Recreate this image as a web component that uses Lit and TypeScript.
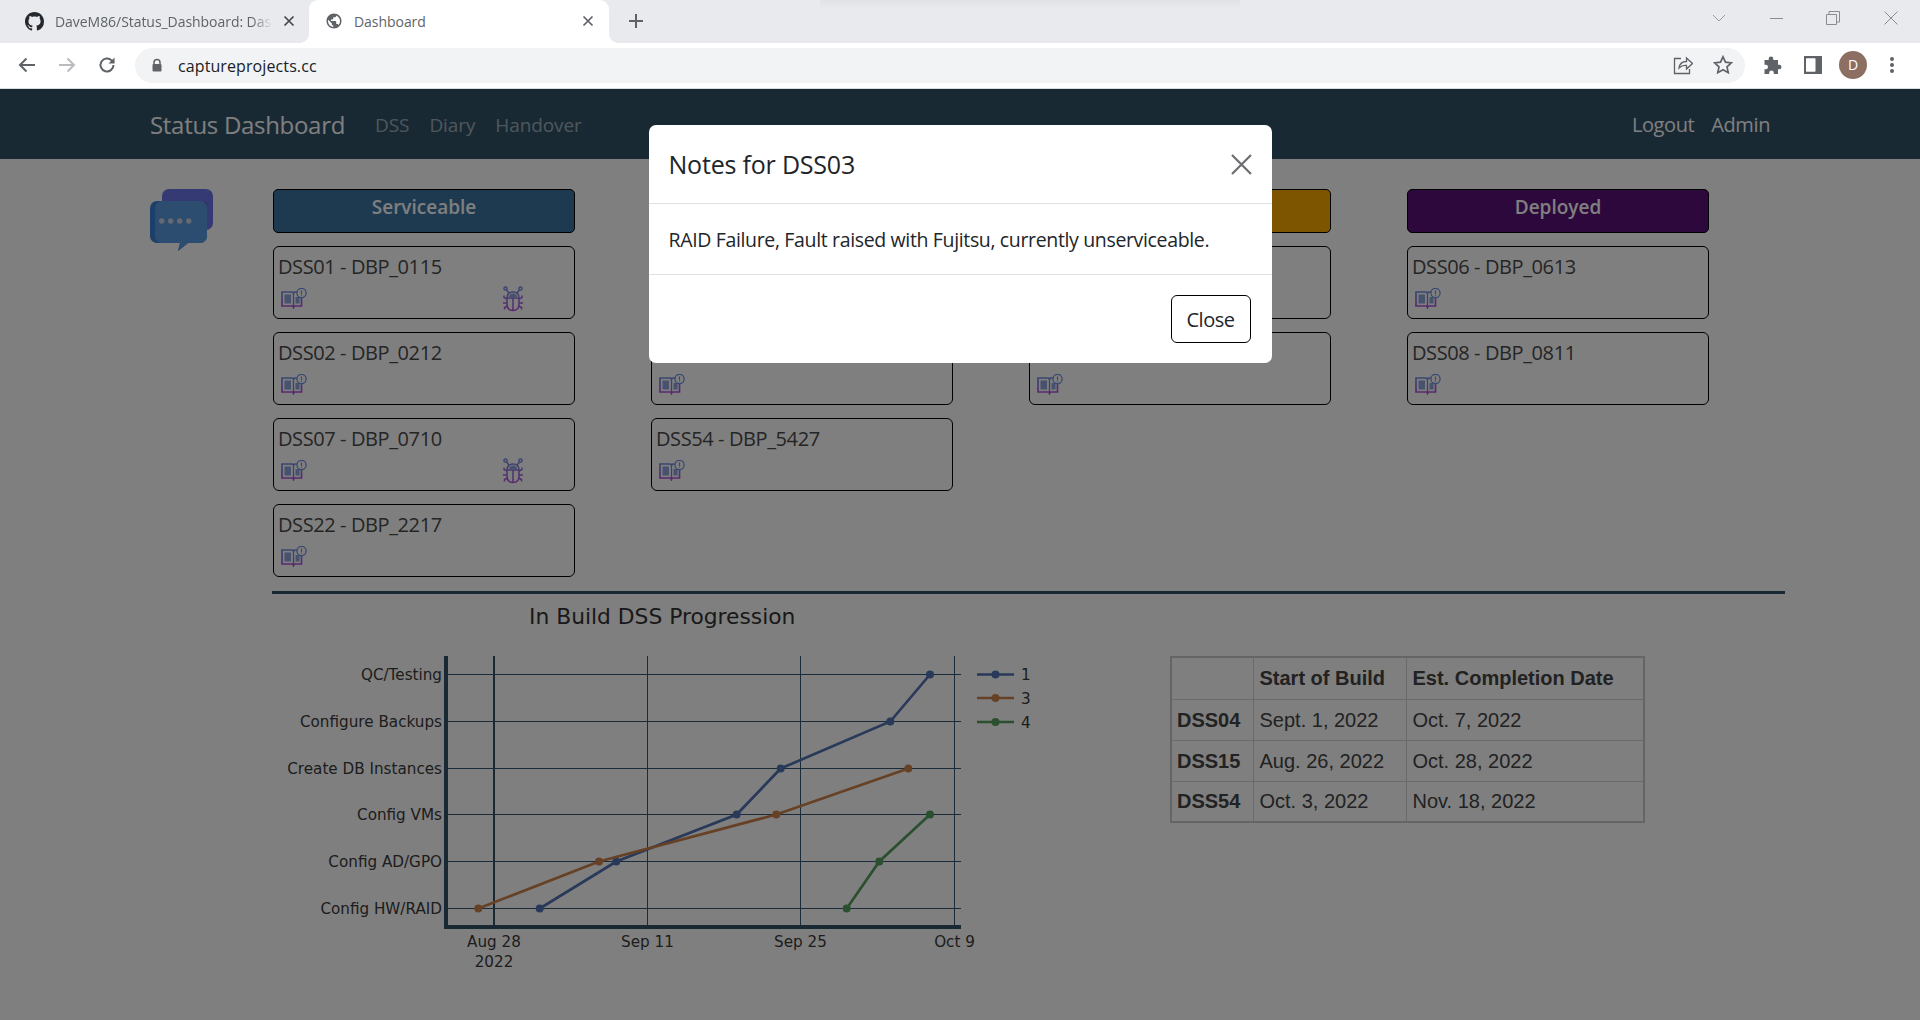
import { LitElement, html, css, svg } from "lit";
import { customElement } from "lit/decorators.js";

const bookIcon = html`<svg class="book" viewBox="0 0 26 21" aria-hidden="true">
  <defs><linearGradient id="g1" gradientUnits="userSpaceOnUse" x1="0" y1="3" x2="0" y2="20"><stop offset="0" stop-color="#6f92e0"/><stop offset="1" stop-color="#b84cdc"/></linearGradient></defs>
  <path d="M1 4h9.500q1.500 0 2 1q.5-1 2-1h6v14h-7.500l-.5 1.500l-.5-1.500h-11z" fill="none" stroke="url(#g1)" stroke-width="1.700"/>
  <path d="M12.500 5v13" stroke="url(#g1)" stroke-width="1.300"/>
  <rect x="3.500" y="6.500" width="6.500" height="9" fill="#8fa4dc"/>
  <rect x="14.500" y="9" width="4" height="6.500" fill="#8fa4dc"/>
  <circle cx="20.500" cy="5" r="4.600" fill="#fff" stroke="#6f92e0" stroke-width="1.300"/>
  <path d="M20.500 2.500v3.400M20.500 6.800v1" stroke="#6f92e0" stroke-width="1.200"/>
</svg>`;

const bugIcon = html`<svg class="bug" viewBox="0 0 22 26" aria-hidden="true">
  <defs><linearGradient id="g2" gradientUnits="userSpaceOnUse" x1="0" y1="0" x2="0" y2="26"><stop offset="0" stop-color="#6f92e0"/><stop offset="1" stop-color="#b84cdc"/></linearGradient></defs>
  <g fill="none" stroke="url(#g2)" stroke-width="1.500">
    <circle cx="3.500" cy="2.500" r="1.600"/><circle cx="18.500" cy="2.500" r="1.600"/>
    <path d="M4.500 4l3 3.500M17.500 4l-3 3.500"/>
    <path d="M5 12q0-6 6-6t6 6v6q0 6.500-6 6.500t-6-6.500z"/>
    <path d="M5 12h12M11 12v12.500"/>
    <path d="M5 13l-3-1.500v-2M17 13l3-1.500v-2M5 17h-4M17 17h4M5.500 20l-3 1.500v2M16.500 20l3 1.500v2"/>
  </g>
  <path d="M7 11q0-3.500 4-3.500t4 3.500z" fill="#8fa4dc"/>
</svg>`;

interface Card { name: string; bug?: boolean }
const columns: { title: string; cls: string; cards: Card[] }[] = [
  { title: "Serviceable", cls: "c-blue", cards: [
    { name: "DSS01 - DBP_0115", bug: true },
    { name: "DSS02 - DBP_0212" },
    { name: "DSS07 - DBP_0710", bug: true },
    { name: "DSS22 - DBP_2217" },
  ] },
  { title: "In Build", cls: "c-green", cards: [
    { name: "DSS04" },
    { name: "DSS15" },
    { name: "DSS54 - DBP_5427" },
  ] },
  { title: "Unserviceable", cls: "c-orange", cards: [
    { name: "DSS03" },
    { name: "DSS05" },
  ] },
  { title: "Deployed", cls: "c-purple", cards: [
    { name: "DSS06 - DBP_0613" },
    { name: "DSS08 - DBP_0811" },
  ] },
];

const yRows = [
  { label: "QC/Testing", y: 18.5 },
  { label: "Configure Backups", y: 65.5 },
  { label: "Create DB Instances", y: 112.5 },
  { label: "Config VMs", y: 158.5 },
  { label: "Config AD/GPO", y: 205.5 },
  { label: "Config HW/RAID", y: 252.5 },
];
// x positions below are relative to the chart's left edge at page x = 270; y to page y = 656.
const xTicks = [
  { x: 224, label: "Aug 28", sub: "2022" },
  { x: 377.5, label: "Sep 11" },
  { x: 530.5, label: "Sep 25" },
  { x: 684.5, label: "Oct 9" },
];
const series = [
  { color: "#5072b4", pts: [[269.7, 252.5], [346.3, 205.5], [466.7, 158.5], [510.7, 112.5], [620.3, 65.5], [660, 18.5]] },
  { color: "#cc834b", pts: [[208.3, 252.5], [329, 205.5], [506.3, 158.5], [638.3, 112.5]] },
  { color: "#55a05f", pts: [[576.7, 252.5], [609.3, 205.5], [660, 158.5]] },
];
const legend = [
  { label: "1", color: "#5072b4", y: 18.5 },
  { label: "3", color: "#cc834b", y: 42 },
  { label: "4", color: "#55a05f", y: 66 },
];

const rows = [
  ["DSS04", "Sept. 1, 2022", "Oct. 7, 2022"],
  ["DSS15", "Aug. 26, 2022", "Oct. 28, 2022"],
  ["DSS54", "Oct. 3, 2022", "Nov. 18, 2022"],
];

@customElement("app-root")
export class AppRoot extends LitElement {
  static styles = css`
    :host { display: block; width: 1920px; height: 1020px; overflow: hidden; background: #fff; font-family: "Open Sans", "Noto Sans", sans-serif; color: #4a4a4a; }
    * { box-sizing: border-box; }

    .tabstrip { height: 43px; background: #e8eaed; display: flex; align-items: flex-start; position: relative; }
    .tabstrip::before { content: ""; position: absolute; left: 820px; top: 0; width: 420px; height: 9px; background: linear-gradient(180deg, rgba(0,0,0,.035), transparent); }
    .tab { height: 43px; width: 300px; display: flex; align-items: center; font-size: 14px; color: #5f6368; position: relative; letter-spacing: -.05px; padding-bottom: 1px; }
    .tab.inactive { width: 309px; padding-left: 25px; }
    .tab.active { background: #fff; border-radius: 9px 9px 0 0; padding-left: 16px; }
    .tab.active::before, .tab.active::after { content: ""; position: absolute; bottom: 0; width: 9px; height: 9px; }
    .tab.active::before { left: -9px; background: radial-gradient(circle at 0 0, transparent 8.500px, #fff 9px); }
    .tab.active::after { right: -9px; background: radial-gradient(circle at 100% 0, transparent 8.500px, #fff 9px); }
    .tab .title { flex: 1; overflow: hidden; white-space: nowrap; margin-left: 11px; }
    .tab.inactive .title { -webkit-mask-image: linear-gradient(90deg, #000 90%, transparent); mask-image: linear-gradient(90deg, #000 90%, transparent); max-width: 218px; }
    .tab-x { width: 12px; height: 12px; flex: none; }
    .tab.inactive .tab-x { margin: 0 14px 0 10px; }
    .tab.active .tab-x { margin-right: 15px; }
    .newtab { width: 16px; height: 16px; margin: 13px 0 0 19px; }
    .winctl { margin-left: auto; display: flex; align-items: center; height: 36px; }
    .winctl svg { display: block; }

    .toolbar { height: 46px; background: #fff; border-bottom: 1px solid #dadce0; display: flex; align-items: center; padding: 0 0 1px 0; }
    .navbtn { width: 20px; height: 20px; flex: none; }
    .omni { height: 35px; background: #f1f3f4; border-radius: 18px; width: 1610px; margin-left: 18px; display: flex; align-items: center; padding-left: 15px; font-size: 16px; color: #202124; letter-spacing: .1px; }
    .omni .url { margin-left: 14px; flex: 1; padding-top: 1px; }

    .page { position: relative; height: 931px; overflow: hidden; }
    .navbar { height: 70px; background: #305268; display: flex; align-items: center; padding: 0 150px; color: #fff; }
    .brand { font-size: 24px; letter-spacing: -.3px; margin-right: 30px; }
    .nav-link { font-size: 19px; letter-spacing: -.1px; color: rgba(255,255,255,.55); margin-right: 20px; padding-top: 1px; }
    .nav-right { margin-left: auto; display: flex; gap: 17px; }
    .nav-right span { font-size: 20px; letter-spacing: -.4px; color: #fff; }

    .board { display: flex; padding: 30px 0 0 150px; }
    .chat { width: 123px; flex: none; }
    .chat svg { display: block; width: 64px; height: 64px; }
    .cols { display: grid; grid-template-columns: repeat(4, 302px); column-gap: 76px; align-items: start; }
    .col { display: flex; flex-direction: column; gap: 13px; }
    .col-head { height: 44px; border: 1px solid #000; border-radius: 5px; text-align: center; font-weight: 600; font-size: 19px; color: #fff; padding-top: 4px; }
    .c-blue { background: #3c74a0; }
    .c-green { background: #3c8c4a; }
    .c-orange { background: #fbaa00; }
    .c-purple { background: #5a1078; }
    .card { height: 73px; border: 1px solid #000; border-radius: 6px; padding: 5px 4px; font-size: 20px; letter-spacing: -.4px; background: #fff; }
    .card .nm { line-height: 29px; }
    .card .icons { display: flex; align-items: flex-start; height: 26px; padding-left: 3px; margin-top: 5px; }
    .book { width: 26px; height: 21px; margin-top: 2px; flex: none; }
    .bug { width: 22px; height: 26px; margin-left: 195px; flex: none; }

    .rule { height: 3px; width: 1513px; margin: 14px 0 0 272px; background: #305268; }

    .lower { display: flex; align-items: flex-start; padding: 0 0 0 270px; }
    .chartwrap { width: 900px; flex: none; }
    .charttitle { font-family: "DejaVu Sans", Verdana, sans-serif; font-size: 21.800px; padding: 9px 0 0 259px; line-height: 28px; white-space: nowrap; color: #333; }
    .chart { display: block; width: 900px; height: 340px; margin-top: 25px; }
    .chart text { font-family: "DejaVu Sans", Verdana, sans-serif; font-size: 15.200px; fill: #3a3a3a; }
    .chart .ty { text-anchor: end; }
    .chart .tx { text-anchor: middle; }

    table { border-collapse: collapse; table-layout: fixed; width: 473px; font-family: "Liberation Sans", Arial, sans-serif; font-size: 20px; color: #444; margin-top: 62px; border: 2px solid #cacaca; }
    .w1 { width: 82px; } .w2 { width: 153px; } .w3 { width: 238px; }
    th, td { border: 1px solid #d4d4d4; padding: 1px 6px 0; height: 41px; text-align: left; white-space: nowrap; font-weight: 400; }
    tr:first-child th { height: 42px; }
    tr > th:first-child { padding-left: 5px; }
    th { font-weight: 700; }

    .backdrop { position: absolute; inset: 0; background: rgba(0,0,0,.5); display: flex; justify-content: center; align-items: flex-start; padding-top: 36px; }
    .modal { width: 623px; height: 238px; background: #fff; border-radius: 7px; display: flex; flex-direction: column; }
    .m-head { height: 79px; border-bottom: 1px solid #dee2e6; display: flex; align-items: center; padding: 0 20px; justify-content: space-between; }
    .m-title { font-size: 25px; letter-spacing: -.2px; color: #212529; }
    .m-x { width: 21px; height: 21px; display: block; }
    .m-body { height: 71px; border-bottom: 1px solid #dee2e6; padding: 0 20px; display: flex; align-items: center; font-size: 19.500px; letter-spacing: -.35px; color: #212529; }
    .m-foot { flex: 1; display: flex; justify-content: flex-end; align-items: center; padding: 0 21px 0 0; }
    .close-btn { width: 80px; height: 48px; border: 1px solid #000; border-radius: 6px; background: #fff; font: inherit; font-size: 20px; letter-spacing: -.5px; color: #212529; padding: 0; }
  `;

  private chart() {
    return html`<svg class="chart" viewBox="0 0 900 340" aria-label="In Build DSS Progression chart">
      ${xTicks.map((t, i) => svg`<line x1=${t.x} x2=${t.x} y1="0" y2="271" stroke=${i === 0 ? "#305268" : "#345674"} stroke-width=${i === 0 ? 2 : 1}/>`)}
      ${yRows.map(r => svg`<line x1="176" x2="691" y1=${r.y} y2=${r.y} stroke="#345674" stroke-width="1"/>`)}
      <path d="M176 0V271H691" fill="none" stroke="#305268" stroke-width="4"/>
      ${yRows.map(r => svg`<text class="ty" x="172" y=${r.y + 5.5}>${r.label}</text>`)}
      ${xTicks.map(t => svg`<text class="tx" x=${t.x} y="291">${t.label}</text>`)}
      <text class="tx" x="224" y="311">2022</text>
      ${series.map(s => svg`<polyline points=${s.pts.map(p => p.join(",")).join(" ")} fill="none" stroke=${s.color} stroke-width="2.700"/>
        ${s.pts.map(p => svg`<circle cx=${p[0]} cy=${p[1]} r="4" fill=${s.color}/>`)}`)}
      ${legend.map(l => svg`<line x1="707" x2="744" y1=${l.y} y2=${l.y} stroke=${l.color} stroke-width="2.700"/>
        <circle cx="725.500" cy=${l.y} r="4" fill=${l.color}/>
        <text x="751" y=${l.y + 5.5}>${l.label}</text>`)}
    </svg>`;
  }

  render() {
    return html`
      <div class="tabstrip">
        <div class="tab inactive">
          <svg width="19" height="19" viewBox="0 0 16 16" style="flex:none"><path fill="#24292f" d="M8 0C3.580 0 0 3.580 0 8c0 3.540 2.290 6.530 5.470 7.590.4.070.55-.17.55-.38 0-.19-.01-.82-.01-1.490-2.010.37-2.530-.49-2.690-.94-.09-.23-.48-.94-.82-1.130-.28-.15-.68-.52-.01-.53.63-.01 1.080.58 1.230.82.720 1.210 1.870.87 2.330.66.070-.52.280-.87.510-1.070-1.780-.2-3.640-.89-3.640-3.950 0-.87.310-1.590.82-2.150-.08-.2-.36-1.020.08-2.120 0 0 .67-.21 2.200.82.640-.18 1.320-.27 2-.27s1.360.09 2 .27c1.530-1.040 2.200-.82 2.200-.82.440 1.100.16 1.920.08 2.120.51.560.82 1.270.82 2.150 0 3.070-1.870 3.750-3.650 3.950.29.250.54.730.54 1.480 0 1.070-.01 1.930-.01 2.200 0 .21.150.46.550.38A8.010 8.010 0 0 0 16 8c0-4.420-3.580-8-8-8z"/></svg>
          <span class="title">DaveM86/Status_Dashboard: Das</span>
          <svg class="tab-x" viewBox="0 0 12 12"><path d="M1.500 1.500l9 9M10.500 1.500l-9 9" stroke="#45484d" stroke-width="1.700"/></svg>
        </div>
        <div class="tab active">
          <svg width="18" height="18" viewBox="0 0 24 24" style="flex:none"><path fill="#5f6368" d="M12 2C6.480 2 2 6.480 2 12s4.480 10 10 10 10-4.480 10-10S17.520 2 12 2zm-1 17.930c-3.950-.49-7-3.850-7-7.930 0-.62.080-1.210.21-1.790L9 15v1c0 1.100.9 2 2 2v1.930zm6.900-2.540c-.26-.81-1-1.390-1.900-1.390h-1v-3c0-.55-.45-1-1-1H8v-2h2c.55 0 1-.45 1-1V7h2c1.100 0 2-.9 2-2v-.41c2.930 1.190 5 4.060 5 7.410 0 2.080-.8 3.970-2.100 5.390z"/></svg>
          <span class="title">Dashboard</span>
          <svg class="tab-x" viewBox="0 0 12 12"><path d="M1.500 1.500l9 9M10.500 1.500l-9 9" stroke="#5f6368" stroke-width="1.700"/></svg>
        </div>
        <svg class="newtab" viewBox="0 0 16 16"><path d="M8 1v14M1 8h14" stroke="#5f6368" stroke-width="2"/></svg>
        <div class="winctl">
          <svg width="14" height="10" viewBox="0 0 14 10" style="margin-right:44px"><path d="M1 2l6 6 6-6" fill="none" stroke="#9a9c9f" stroke-width="1"/></svg>
          <svg width="14" height="14" viewBox="0 0 14 14" style="margin-right:42px"><path d="M0 7.500h13" stroke="#8a8c8f" stroke-width="1"/></svg>
          <svg width="14" height="14" viewBox="0 0 14 14" style="margin-right:44px"><path d="M.5 3.500h10v10h-10zM3 3.500V.5h10.500v10.500h-3" fill="none" stroke="#8a8c8f" stroke-width="1"/></svg>
          <svg width="14" height="14" viewBox="0 0 14 14" style="margin-right:22px"><path d="M.5.500l13 13M13.500.500l-13 13" stroke="#8a8c8f" stroke-width="1"/></svg>
        </div>
      </div>
      <div class="toolbar">
        <svg class="navbtn" style="margin-left:17px" viewBox="0 0 20 20"><path d="M18 10H3M9.500 3.500L3 10l6.500 6.500" fill="none" stroke="#5f6368" stroke-width="2"/></svg>
        <svg class="navbtn" style="margin-left:20px" viewBox="0 0 20 20"><path d="M2 10h15M10.500 3.500L17 10l-6.500 6.500" fill="none" stroke="#b9bbbe" stroke-width="2"/></svg>
        <svg class="navbtn" style="margin-left:20px" viewBox="0 0 20 20"><path d="M16.500 10a6.500 6.500 0 1 1-1.900-4.600L17 7.500" fill="none" stroke="#5f6368" stroke-width="2"/><path d="M17.500 2.500v6h-6z" fill="#5f6368"/></svg>
        <div class="omni">
          <svg width="14" height="14" viewBox="0 0 14 14" style="flex:none"><path d="M4 6.500V4.500a3 3 0 0 1 6 0v2" fill="none" stroke="#5f6368" stroke-width="1.500"/><rect x="2.500" y="6" width="9" height="7.500" rx="1" fill="#5f6368"/></svg>
          <span class="url">captureprojects.cc</span>
          <svg width="20" height="20" viewBox="0 0 20 20" style="margin-right:20px;flex:none"><path d="M8 3.500H1.500v15h15V14M6 13q1-6.500 7.500-6.500V3l6 5.500-6 5.500V10.500Q9 10 6 13z" fill="none" stroke="#5f6368" stroke-width="1.300"/></svg>
          <svg width="20" height="20" viewBox="0 0 20 20" style="margin-right:12px;flex:none"><path d="M10 1.800l2.500 5.400 5.900.7-4.400 4 1.200 5.800L10 14.800l-5.200 2.900L6 11.900l-4.400-4 5.900-.7z" fill="none" stroke="#5f6368" stroke-width="1.700"/></svg>
        </div>
        <svg width="20" height="20" viewBox="0 0 20 20" style="margin-left:18px;flex:none"><path fill="#5f6368" d="M8 1.500a2.300 2.300 0 0 1 2.300 2.300V5H15v4.700h1.200a2.300 2.300 0 0 1 0 4.600H15V19H10.800v-1.200a2.300 2.300 0 0 0-4.600 0V19H1.500v-4.700h1.200a2.300 2.300 0 0 0 0-4.600H1.500V5h4.200V3.800A2.300 2.300 0 0 1 8 1.500z"/></svg>
        <svg width="18" height="18" viewBox="0 0 18 18" style="margin-left:21px;flex:none"><path fill="#5f6368" d="M0 0h18v18H0zM2 2.500v13h9v-13z"/><rect x="2.500" y="2.500" width="9" height="13" fill="#fff"/></svg>
        <svg width="28" height="28" viewBox="0 0 28 28" style="margin-left:17px;flex:none"><circle cx="14" cy="14" r="14" fill="#8d6e63"/><text x="14" y="19" text-anchor="middle" font-size="14" fill="#fff" font-family="Open Sans, sans-serif">D</text></svg>
        <svg width="6" height="18" viewBox="0 0 6 18" style="margin-left:22px;flex:none"><circle cx="3" cy="3" r="2" fill="#5f6368"/><circle cx="3" cy="9" r="2" fill="#5f6368"/><circle cx="3" cy="15" r="2" fill="#5f6368"/></svg>
      </div>
      <div class="page">
        <div class="navbar">
          <span class="brand">Status Dashboard</span>
          <span class="nav-link">DSS</span>
          <span class="nav-link">Diary</span>
          <span class="nav-link">Handover</span>
          <div class="nav-right"><span>Logout</span><span>Admin</span></div>
        </div>
        <div class="board">
          <div class="chat">
            <svg viewBox="0 0 64 64" aria-hidden="true">
              <path d="M12 12V7a7 7 0 0 1 7-7h37a7 7 0 0 1 7 7v27a7 7 0 0 1-7 7h-4V12z" fill="#6a74e8"/>
              <path d="M52 13h5v28h-5z" fill="#5a60cc"/>
              <path d="M7 12H50a7 7 0 0 1 7 7V47a7 7 0 0 1-7 7H38L28 62 30 54H7a7 7 0 0 1-7-7V19a7 7 0 0 1 7-7z" fill="#3a80d0"/>
              <path d="M12 12H50a7 7 0 0 1 7 7V47a7 7 0 0 1-7 7H38L28 62 30 54H12a7 7 0 0 1-7-7V19a7 7 0 0 1 7-7z" fill="#5a9ae0"/>
              <circle cx="11.700" cy="32" r="2.700" fill="#c8d4e4"/><circle cx="20.700" cy="32" r="2.700" fill="#c8d4e4"/><circle cx="29.700" cy="32" r="2.700" fill="#c8d4e4"/><circle cx="38.700" cy="32" r="2.700" fill="#c8d4e4"/>
            </svg>
          </div>
          <div class="cols">
            ${columns.map(c => html`<div class="col">
              <div class="col-head ${c.cls}">${c.title}</div>
              ${c.cards.map(k => html`<div class="card"><div class="nm">${k.name}</div><div class="icons">${bookIcon}${k.bug ? bugIcon : ""}</div></div>`)}
            </div>`)}
          </div>
        </div>
        <div class="rule"></div>
        <div class="lower">
          <div class="chartwrap">
            <div class="charttitle">In Build DSS Progression</div>
            ${this.chart()}
          </div>
          <table>
            <colgroup><col class="w1"><col class="w2"><col class="w3"></colgroup>
            <tr><th></th><th>Start of Build</th><th>Est. Completion Date</th></tr>
            ${rows.map(r => html`<tr><th>${r[0]}</th><td>${r[1]}</td><td>${r[2]}</td></tr>`)}
          </table>
        </div>
        <div class="backdrop">
          <div class="modal">
            <div class="m-head"><span class="m-title">Notes for DSS03</span>
              <svg class="m-x" viewBox="0 0 21 21"><path d="M1 1l19 19M20 1L1 20" stroke="#6b6d70" stroke-width="2.200"/></svg></div>
            <div class="m-body">RAID Failure, Fault raised with Fujitsu, currently unserviceable.</div>
            <div class="m-foot"><button class="close-btn">Close</button></div>
          </div>
        </div>
      </div>
    `;
  }
}
